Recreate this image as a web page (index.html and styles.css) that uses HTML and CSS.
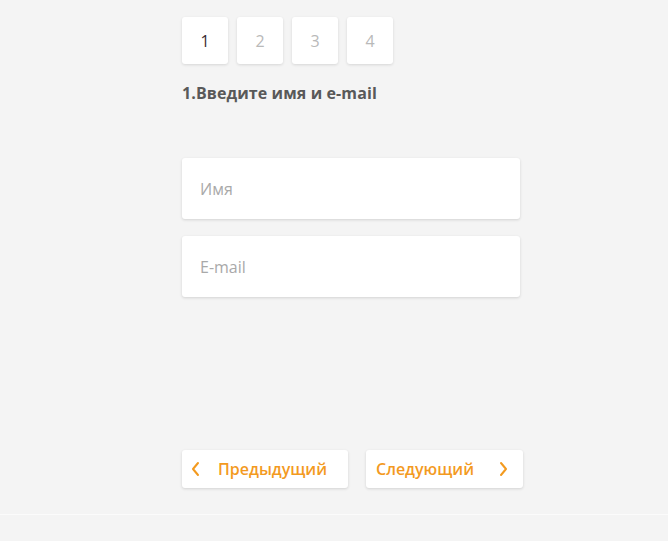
FILE: index.html
```html
<!DOCTYPE html>
<html lang="ru">
<head>
<meta charset="utf-8">
<link rel="stylesheet" href="styles.css">
</head>
<body>
<div class="page">
  <div class="wizard">
    <div class="steps">
      <div class="step active">1</div>
      <div class="step">2</div>
      <div class="step">3</div>
      <div class="step">4</div>
    </div>
    <h2 class="title">1.Введите имя и e-mail</h2>
    <div class="fields">
      <input class="field" type="text" placeholder="Имя">
      <input class="field" type="text" placeholder="E-mail">
    </div>
    <div class="nav">
      <button class="btn prev"><svg class="chev" width="9" height="16" viewBox="0 0 9 16"><path d="M7 2L2 8l5 6" fill="none" stroke="#f39a1f" stroke-width="2" stroke-linecap="round" stroke-linejoin="round"/></svg><span>Предыдущий</span></button>
      <button class="btn next"><span>Следующий</span><svg class="chev" width="9" height="16" viewBox="0 0 9 16"><path d="M2 2l5 6-5 6" fill="none" stroke="#f39a1f" stroke-width="2" stroke-linecap="round" stroke-linejoin="round"/></svg></button>
    </div>
  </div>
  <div class="footer-line"></div>
</div>
</body>
</html>
```
FILE: styles.css
```css
html, body {
  margin: 0;
  padding: 0;
  background: #f4f4f4;
  font-family: "Open Sans", "Liberation Sans", sans-serif;
}
.page {
  height: 541px;
  overflow: hidden;
}
.wizard {
  margin-left: 182px;
  width: 342px;
  padding-top: 17px;
}
.steps {
  display: flex;
  gap: 9px;
}
.step {
  width: 46px;
  height: 47px;
  background: #fff;
  border-radius: 3px;
  box-shadow: 0 1px 3px rgba(0,0,0,0.12);
  display: flex;
  align-items: center;
  justify-content: center;
  font-size: 16px;
  color: #b9b9b9;
}
.step.active {
  color: #3a2a33;
}
.title {
  margin: 19px 0 0;
  font-size: 16px;
  line-height: 20px;
  font-weight: 700;
  color: #595959;
  letter-spacing: 0.1px;
}
.fields {
  margin-top: 55px;
  width: 338px;
  display: flex;
  flex-direction: column;
  gap: 17px;
}
.field {
  box-sizing: border-box;
  width: 338px;
  height: 61px;
  border: none;
  border-radius: 3px;
  background: #fff;
  box-shadow: 0 1px 3px rgba(0,0,0,0.14);
  padding: 0 18px;
  font-family: inherit;
  font-size: 16px;
  color: #555;
  outline: none;
}
.field::placeholder {
  color: #a9a9a9;
}
.nav {
  margin-top: 153px;
  display: flex;
  gap: 18px;
}
.btn {
  height: 38px;
  border: none;
  border-radius: 3px;
  background: #fff;
  box-shadow: 0 1px 3px rgba(0,0,0,0.14);
  font-family: inherit;
  font-size: 16px;
  font-weight: 600;
  color: #f39a1f;
  display: flex;
  align-items: center;
  padding: 0;
}
.btn.prev {
  width: 166px;
  padding-left: 9px;
  gap: 18px;
}
.btn.next {
  width: 157px;
  padding-left: 10px;
  gap: 25px;
}
.chev {
  display: block;
}
.footer-line {
  margin-top: 26px;
  height: 1px;
  background: #fbfbfb;
}
```
